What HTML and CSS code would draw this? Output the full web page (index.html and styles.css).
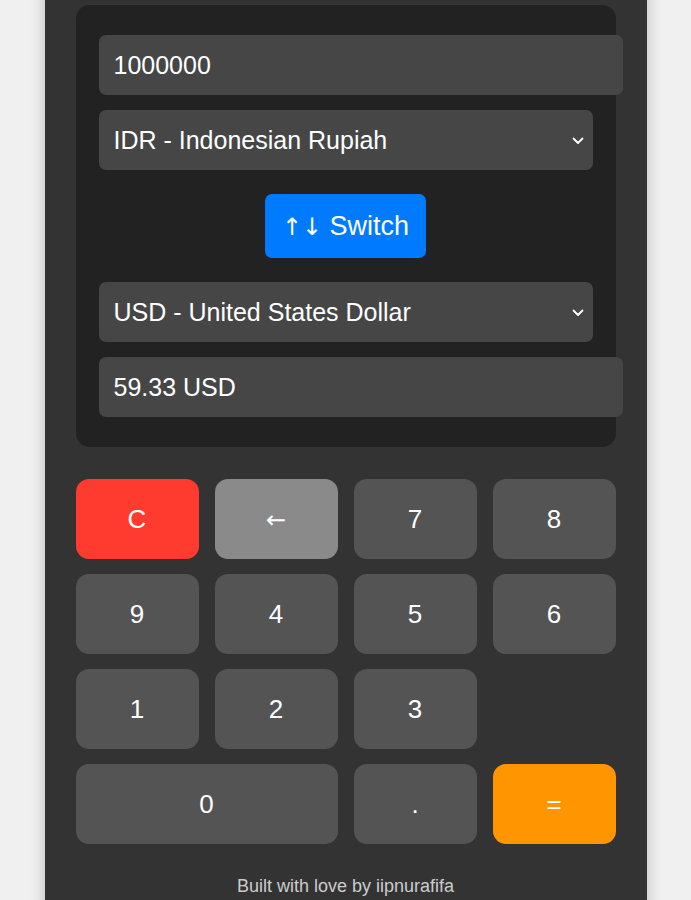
FILE: index.html
```html
<!DOCTYPE html>
<html lang="en">
<head>
<meta charset="utf-8">
<title>Currency Calculator</title>
<link rel="stylesheet" href="styles.css">
</head>
<body>
<div class="app">
  <div class="converter">
    <input class="field" type="text" value="1000000">
    <div class="select-wrap gap-s">
      <select class="select">
        <option>IDR - Indonesian Rupiah</option>
      </select>
      <svg class="chevron" width="12" height="8" viewBox="0 0 12 8"><path d="M1.5 1.5 L6 6 L10.5 1.5" fill="none" stroke="#fff" stroke-width="1.8" stroke-linecap="round" stroke-linejoin="round"/></svg>
    </div>
    <button class="switch"><span class="arrows">↑↓</span> Switch</button>
    <div class="select-wrap gap-l">
      <select class="select">
        <option>USD - United States Dollar</option>
      </select>
      <svg class="chevron" width="12" height="8" viewBox="0 0 12 8"><path d="M1.5 1.5 L6 6 L10.5 1.5" fill="none" stroke="#fff" stroke-width="1.8" stroke-linecap="round" stroke-linejoin="round"/></svg>
    </div>
    <input class="field gap-s" type="text" value="59.33 USD" readonly>
  </div>
  <div class="keys">
    <button class="key key-clear">C</button>
    <button class="key key-back"><span class="arrow-glyph">←</span></button>
    <button class="key">7</button>
    <button class="key">8</button>
    <button class="key">9</button>
    <button class="key">4</button>
    <button class="key">5</button>
    <button class="key">6</button>
    <button class="key">1</button>
    <button class="key">2</button>
    <button class="key">3</button>
    <span class="key-empty"></span>
    <button class="key key-zero">0</button>
    <button class="key">.</button>
    <button class="key key-eq">=</button>
  </div>
  <p class="footer">Built with love by iipnurafifa</p>
</div>
</body>
</html>
```

FILE: styles.css
```css
* {
  font-family: "Liberation Sans", Arial, Helvetica, sans-serif;
}

html, body {
  margin: 0;
  padding: 0;
  background: #f0f0f0;
  height: 100%;
  overflow: hidden;
}

.app {
  width: 540px;
  margin: -25px auto 0;
  padding: 30px 31px 40px;
  background: #333333;
  box-shadow: 0 0 14px rgba(0, 0, 0, 0.22);
  min-height: 1000px;
}

.converter {
  background: #222222;
  border-radius: 14px;
  padding: 30px 23px 30px;
  display: flex;
  flex-direction: column;
}

.field {
  box-sizing: content-box;
  width: 100%;
  height: 30px;
  padding: 15px;
  margin: 0;
  border: none;
  outline: none;
  border-radius: 7px;
  background: #464646;
  color: #ffffff;
  font-size: 25px;
}

.gap-s {
  margin-top: 15px;
}

.gap-l {
  margin-top: 24px;
}

.select-wrap {
  position: relative;
  width: 100%;
}

.select {
  appearance: none;
  -webkit-appearance: none;
  box-sizing: border-box;
  width: 100%;
  height: 60px;
  padding: 0 40px 0 15px;
  margin: 0;
  border: none;
  outline: none;
  border-radius: 7px;
  background: #464646;
  color: #ffffff;
  font-size: 25px;
}

.chevron {
  position: absolute;
  right: 9px;
  top: 27px;
}

.switch {
  align-self: center;
  margin-top: 24px;
  height: 64px;
  padding: 0 17px;
  border: none;
  border-radius: 7px;
  background: #007bff;
  color: #ffffff;
  font-size: 27px;
  cursor: pointer;
}

.arrows {
  font-family: "DejaVu Sans", sans-serif;
  font-size: 24px;
}

.keys {
  margin-top: 32px;
  display: grid;
  grid-template-columns: repeat(4, 1fr);
  grid-auto-rows: 80px;
  column-gap: 16px;
  row-gap: 15px;
}

.key {
  border: none;
  border-radius: 13px;
  background: #545454;
  color: #ffffff;
  font-size: 26px;
  padding: 0;
  cursor: pointer;
}

.arrow-glyph {
  font-family: "DejaVu Sans", sans-serif;
  font-size: 24px;
}

.key-clear {
  background: #ff3b30;
}

.key-back {
  background: #8a8a8a;
}

.key-eq {
  background: #ff9500;
}

.key-zero {
  grid-column: span 2;
}

.footer {
  margin: 32px 0 0;
  text-align: center;
  color: #cccccc;
  font-size: 18px;
}
```
